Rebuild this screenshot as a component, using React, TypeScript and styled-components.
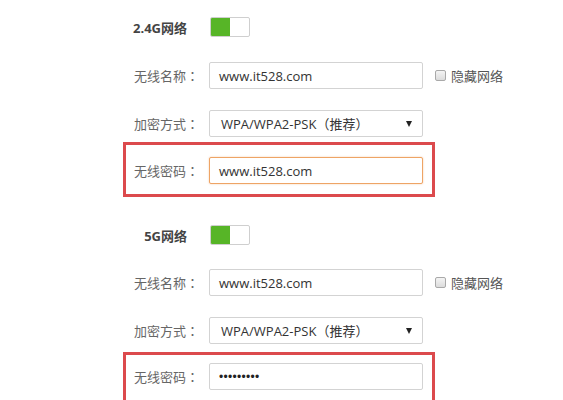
import React from "react";
import styled, { createGlobalStyle } from "styled-components";

const Global = createGlobalStyle`
  html, body { margin: 0; padding: 0; background: #fff; overflow: hidden; }
  body { font-family: "Open Sans", "Noto Sans CJK SC", sans-serif; }
`;

const Page = styled.div`
  width: 563px;
  height: 400px;
  padding: 17px 0 0 123px;
  box-sizing: border-box;
  display: flex;
  flex-direction: column;
`;

const HeadRow = styled.div<{ $mt: number }>`
  display: flex;
  align-items: center;
  gap: 11px;
  height: 20px;
  margin-top: ${(p) => p.$mt}px;
`;

const HeadLabel = styled.div`
  width: 76px;
  box-sizing: border-box;
  padding-right: 12px;
  text-align: right;
  font-family: "Open Sans", "Noto Sans CJK SC", sans-serif;
  font-weight: 700;
  font-size: 13px;
  color: #444;
  white-space: nowrap;
`;

const Toggle = styled.div`
  width: 40px;
  height: 20px;
  box-sizing: border-box;
  border: 1px solid #cfcfcf;
  border-radius: 2px;
  display: flex;
  background: #fff;
  overflow: hidden;
`;

const ToggleOn = styled.div`
  width: 19px;
  height: 100%;
  background: #57b527;
`;

const Row = styled.div<{ $mt: number }>`
  display: flex;
  align-items: center;
  gap: 10px;
  margin-top: ${(p) => p.$mt}px;
`;

const Label = styled.div`
  width: 76px;
  text-align: right;
  font-family: "Noto Sans CJK SC", sans-serif;
  font-size: 13px;
  color: #666;
  white-space: nowrap;
`;

const Colon = styled.span`
  font-family: "Noto Sans CJK TC", sans-serif;
`;

const Field = styled.div<{ $focus?: boolean }>`
  width: 214px;
  height: 27px;
  box-sizing: border-box;
  border: 1px solid ${(p) => (p.$focus ? "#eea465" : "#d3d3d3")};
  box-shadow: ${(p) => (p.$focus ? "0 0 2px rgba(238,164,101,0.6)" : "none")};
  border-radius: 2px;
  padding: 0 9px;
  display: flex;
  align-items: center;
  justify-content: space-between;
  font-family: "Open Sans", "Noto Sans CJK SC", sans-serif;
  font-size: 13px;
  color: #333;
  background: #fff;
`;

const SelectText = styled.span`
  padding-left: 2px;
`;

const Arrow = styled.span`
  width: 0;
  height: 0;
  border-left: 3px solid transparent;
  border-right: 3px solid transparent;
  border-top: 6px solid #222;
  margin-right: 1px;
`;

const Dots = styled.span`
  font-family: "Liberation Sans", sans-serif;
  font-size: 12px;
  letter-spacing: 0.3px;
  color: #222;
`;

const Check = styled.label`
  display: flex;
  align-items: center;
  gap: 5px;
  margin-left: 2px;
  font-family: "Noto Sans CJK SC", sans-serif;
  font-size: 13px;
  color: #555;
`;

const Box = styled.span`
  width: 11px;
  height: 11px;
  box-sizing: border-box;
  border: 1px solid #a9a9a9;
  border-radius: 2px;
  background: linear-gradient(#f4f4f4, #dcdcdc);
`;

const Highlight = styled.div<{ $mt: number; $pt: number }>`
  width: 312px;
  height: 55px;
  box-sizing: border-box;
  margin-top: ${(p) => p.$mt}px;
  padding-top: ${(p) => p.$pt}px;
  box-shadow: inset 0 0 0 3px #dc4a4d;
  flex-shrink: 0;
`;

type SectionProps = {
  title: string;
  headMt: number;
  boxMt: number;
  boxPt: number;
  password: React.ReactNode;
  focus?: boolean;
  gaps: [number, number];
};

function FieldLabel({ text }: { text: string }) {
  return (
    <Label>
      {text}
      <Colon>：</Colon>
    </Label>
  );
}

function Section({ title, headMt, boxMt, boxPt, password, focus, gaps }: SectionProps) {
  return (
    <>
      <HeadRow $mt={headMt}>
        <HeadLabel>{title}</HeadLabel>
        <Toggle>
          <ToggleOn />
        </Toggle>
      </HeadRow>
      <Row $mt={gaps[0]}>
        <FieldLabel text="无线名称" />
        <Field>www.it528.com</Field>
        <Check>
          <Box />
          隐藏网络
        </Check>
      </Row>
      <Row $mt={gaps[1]}>
        <FieldLabel text="加密方式" />
        <Field>
          <SelectText>WPA/WPA2-PSK（推荐）</SelectText>
          <Arrow />
        </Field>
      </Row>
      <Highlight $mt={boxMt} $pt={boxPt}>
        <Row $mt={0}>
          <FieldLabel text="无线密码" />
          <Field $focus={focus}>{password}</Field>
        </Row>
      </Highlight>
    </>
  );
}

export default function App() {
  return (
    <>
      <Global />
      <Page>
        <Section
          title="2.4G网络"
          headMt={0}
          gaps={[25, 21]}
          boxMt={5}
          boxPt={15}
          focus
          password="www.it528.com"
        />
        <Section
          title="5G网络"
          headMt={28}
          gaps={[24, 21]}
          boxMt={8}
          boxPt={11}
          password={<Dots>•••••••••</Dots>}
        />
      </Page>
    </>
  );
}
